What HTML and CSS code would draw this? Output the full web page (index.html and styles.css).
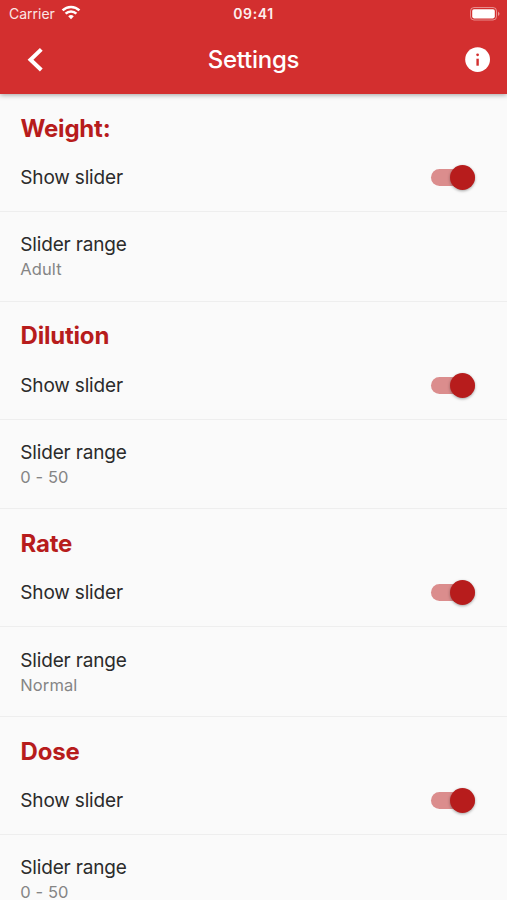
FILE: index.html
```html
<!DOCTYPE html>
<html lang="en">
<head>
<meta charset="utf-8">
<title>Settings</title>
<link rel="stylesheet" href="styles.css">
</head>
<body>
<header class="top">
  <div class="status">
    <div class="carrier"><span>Carrier</span>
      <svg class="wifi" viewBox="0 0 20 15" width="20" height="15"><path d="M1.600 5.400a12 12 0 0 1 16.800 0M4.600 8.600a7.700 7.700 0 0 1 10.800 0" fill="none" stroke="#fff" stroke-width="2.500"/><path d="M7.200 11.300a4.200 4.200 0 0 1 5.600 0L10 14.200z" fill="#fff"/></svg>
    </div>
    <time class="clock">09:41</time>
    <svg class="battery" viewBox="0 0 30 14" width="30" height="14"><rect x=".5" y=".5" width="26" height="12.500" rx="3.500" fill="none" stroke="#fff" stroke-opacity=".45"/><rect x="2.200" y="2.200" width="22.600" height="9.200" rx="1.800" fill="#fff"/><path d="M28 4.500q3 2.300 0 4.600z" fill="#fff" fill-opacity=".5"/></svg>
  </div>
  <nav class="bar">
    <svg class="back" viewBox="0 0 18 26" width="18" height="26"><path d="M15.300 2.400L4.500 12.700l10.800 10.300" fill="none" stroke="#fff" stroke-width="4"/></svg>
    <h1>Settings</h1>
    <svg class="info" viewBox="0 0 26 26" width="26" height="26"><circle cx="12.600" cy="12.600" r="12.400" fill="#fff"/><circle cx="12.600" cy="7.800" r="1.400" fill="#d32f2f"/><path d="M11.400 11.700h2.400v7h-2.400z" fill="#d32f2f"/></svg>
  </nav>
</header>
<main>
  <section class="group"><h2>Weight:</h2><div class="toggle"><span>Show slider</span><i class="switch"></i></div><div class="range"><p>Slider range</p><small>Adult</small></div></section>
  <section class="group"><h2>Dilution</h2><div class="toggle"><span>Show slider</span><i class="switch"></i></div><div class="range"><p>Slider range</p><small>0 - 50</small></div></section>
  <section class="group"><h2>Rate</h2><div class="toggle"><span>Show slider</span><i class="switch"></i></div><div class="range"><p>Slider range</p><small>Normal</small></div></section>
  <section class="group"><h2>Dose</h2><div class="toggle"><span>Show slider</span><i class="switch"></i></div><div class="range"><p>Slider range</p><small>0 - 50</small></div></section>
</main>
</body>
</html>
```
FILE: styles.css
```css
* { box-sizing: border-box; }
body { margin: 0; height: 900px; overflow: hidden; background: #fafafa; color: #2b2b2b; font-family: Inter, sans-serif; }
.top { position: relative; height: 94px; background: #d32f2f; color: #fff; box-shadow: 0 1px 5px rgba(0,0,0,.36); }
.status { display: grid; grid-template-columns: 1fr auto 1fr; height: 27px; align-items: center; padding: 0 8px; }
.carrier { display: flex; align-items: center; gap: 6px; padding-left: 1px; font-size: 14px; color: #fbe6e6; }
.wifi { margin-top: -2px; }
.clock { font-size: 14px; font-weight: 600; letter-spacing: .6px; color: #fdeeee; }
.battery { justify-self: end; margin-right: -1px; }
.bar { display: grid; grid-template-columns: 1fr auto 1fr; height: 65px; align-items: center; padding: 0 16px; }
.back { margin-left: 10px; }
h1 { margin: 0; font-size: 24px; font-weight: 500; letter-spacing: -.25px; }
.info { justify-self: end; }
.group { height: 207.700px; padding-top: 17.700px; }
h2 { margin: 0; padding-left: 20.500px; font-size: 24px; line-height: 34px; font-weight: 700; letter-spacing: -.2px; color: #b71c1c; }
.toggle { display: flex; align-items: center; justify-content: space-between; height: 66.400px; padding: 0 32px 2.100px 20.300px; border-bottom: 1px solid #eee; font-size: 19px; letter-spacing: -.17px; }
.switch { position: relative; width: 44px; height: 17px; border-radius: 9px; background: #db8d8d; }
.switch::after { content: ""; position: absolute; right: 0; top: -4px; width: 25px; height: 25px; border-radius: 50%; background: #b71c1c; box-shadow: 0 1px 3px rgba(0,0,0,.35); }
.range { height: 89.600px; padding: 20.100px 20.300px 0; border-bottom: 1px solid #eee; }
p { margin: 0; font-size: 19px; line-height: 25px; letter-spacing: -.17px; }
small { display: block; font-size: 16.500px; line-height: 25px; letter-spacing: .1px; color: #858585; }
```
